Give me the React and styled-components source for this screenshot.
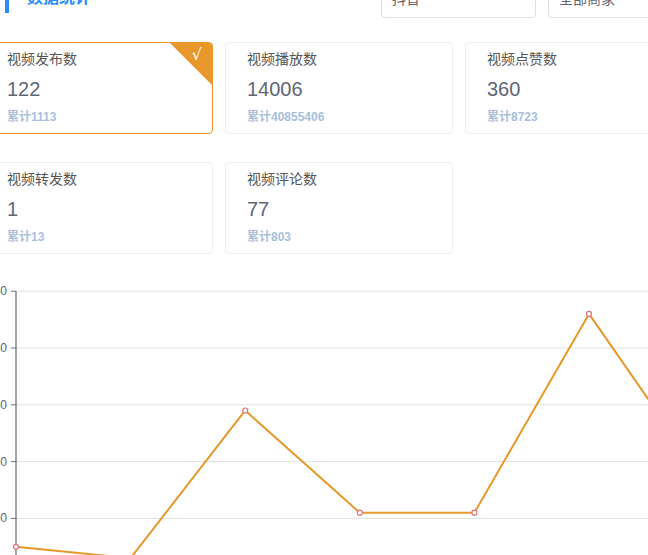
import React from "react";
import styled, { createGlobalStyle } from "styled-components";
import { ChevronDown } from "lucide-react";

const cards = [
  { title: "视频发布数", value: "122", total: "累计1113", active: true },
  { title: "视频播放数", value: "14006", total: "累计40855406" },
  { title: "视频点赞数", value: "360", total: "累计8723" },
  { title: "视频转发数", value: "1", total: "累计13" },
  { title: "视频评论数", value: "77", total: "累计803" },
];

const series = [5, 3, 29, 11, 11, 46, 17];

// chart geometry (svg coordinates)
const AXIS_X = 31;
const STEP_X = 114.6;
const ZERO_Y = 295.2;
const UNIT_Y = 5.68;

function Chart() {
  const ticks = [0, 10, 20, 30, 40, 50];
  const pts = series.map((v, i) => [AXIS_X + i * STEP_X, ZERO_Y - v * UNIT_Y]);
  return (
    <ChartBox>
      <svg width="718" height="320" viewBox="0 0 718 320">
        {ticks.map((t) => {
          const y = ZERO_Y - t * UNIT_Y;
          return (
            <g key={t}>
              <line x1={AXIS_X} x2="718" y1={y} y2={y} stroke="#e0e0e0" strokeWidth="1" />
              <line x1={AXIS_X - 5} x2={AXIS_X} y1={y} y2={y} stroke="#6e7079" strokeWidth="1" />
              <text
                x={AXIS_X - 9}
                y={y + 4}
                textAnchor="end"
                fontSize="12"
                fill="#5f6270"
                fontFamily="Liberation Sans, sans-serif"
              >
                {t}
              </text>
            </g>
          );
        })}
        <line x1={AXIS_X} x2={AXIS_X} y1={ZERO_Y - 50 * UNIT_Y} y2="320" stroke="#666" strokeWidth="1.2" />
        <polyline
          points={pts.map((p) => p.join(",")).join(" ")}
          fill="none"
          stroke="#e8982a"
          strokeWidth="2"
          strokeLinejoin="round"
        />
        {pts.map(([x, y], i) => (
          <circle key={i} cx={x} cy={y} r="2.5" fill="#fff" stroke="#e2727a" strokeWidth="1.2" />
        ))}
      </svg>
    </ChartBox>
  );
}

export default function App() {
  return (
    <>
      <GlobalStyle />
      <Page>
        <Header>
          <Title>数据统计</Title>
          <Selects>
            <Select>
              <span>抖音</span>
              <ChevronDown size={12} color="#c0c4cc" />
            </Select>
            <Select>
              <span>全部商家</span>
              <ChevronDown size={12} color="#c0c4cc" />
            </Select>
          </Selects>
        </Header>
        <Grid>
          {cards.map((c) => (
            <Card key={c.title} $active={c.active}>
              {c.active && <Check>√</Check>}
              <CardTitle>{c.title}</CardTitle>
              <Value>{c.value}</Value>
              <Total>{c.total}</Total>
            </Card>
          ))}
        </Grid>
        <Chart />
      </Page>
    </>
  );
}

const GlobalStyle = createGlobalStyle`
  html, body {
    margin: 0;
    padding: 0;
    overflow: hidden;
    background: #fff;
    font-family: "Liberation Sans", "Noto Sans CJK SC", sans-serif;
  }
`;

const Page = styled.div`
  width: 718px;
  margin: -22px 0 0 -15px;
`;

const Header = styled.div`
  display: flex;
  align-items: center;
  height: 40px;
`;

const Title = styled.div`
  display: flex;
  align-items: center;
  margin: 0 0 0 20px;
  height: 20px;
  color: #2b8cf7;
  font-size: 16px;
  font-weight: bold;
  line-height: 16px;

  &::before {
    content: "";
    display: block;
    width: 4px;
    height: 20px;
    margin: 9px 18px 0 0;
    background: #2b8cf7;
  }
`;

const Selects = styled.div`
  display: flex;
  gap: 12px;
  margin-left: auto;
`;

const Select = styled.div`
  box-sizing: border-box;
  display: flex;
  align-items: center;
  justify-content: space-between;
  width: 155px;
  height: 40px;
  padding: 0 12px 0 10px;
  border: 1px solid #dcdfe6;
  border-radius: 4px;
  color: #606266;
  font-size: 14px;
`;

const Grid = styled.div`
  display: grid;
  grid-template-columns: repeat(3, 228px);
  column-gap: 12px;
  row-gap: 28px;
  margin-top: 24px;
`;

const Card = styled.div`
  position: relative;
  box-sizing: border-box;
  height: 92px;
  padding: 6px 21px 0;
  border: 1px solid ${(p) => (p.$active ? "#e8982a" : "#ebeef5")};
  border-radius: 4px;
  overflow: hidden;

  &::after {
    content: "";
    display: ${(p) => (p.$active ? "block" : "none")};
    position: absolute;
    top: 0;
    right: 0;
    width: 42px;
    height: 42px;
    background: #e8982a;
    clip-path: polygon(0 0, 100% 0, 100% 100%);
  }
`;

const Check = styled.span`
  position: absolute;
  top: 2px;
  right: 10px;
  z-index: 1;
  color: #fff;
  font-size: 16px;
  font-family: "DejaVu Sans", sans-serif;
`;

const CardTitle = styled.div`
  color: #555;
  font-size: 14px;
  line-height: 20px;
`;

const Value = styled.div`
  margin-top: 6px;
  color: #5e6678;
  font-size: 20px;
  line-height: 28px;
`;

const Total = styled.div`
  margin-top: 6px;
  color: #a8bfdc;
  font-size: 12px;
  font-weight: bold;
  line-height: 16px;
`;

const ChartBox = styled.div`
  margin-top: 26px;
  line-height: 0;
`;
